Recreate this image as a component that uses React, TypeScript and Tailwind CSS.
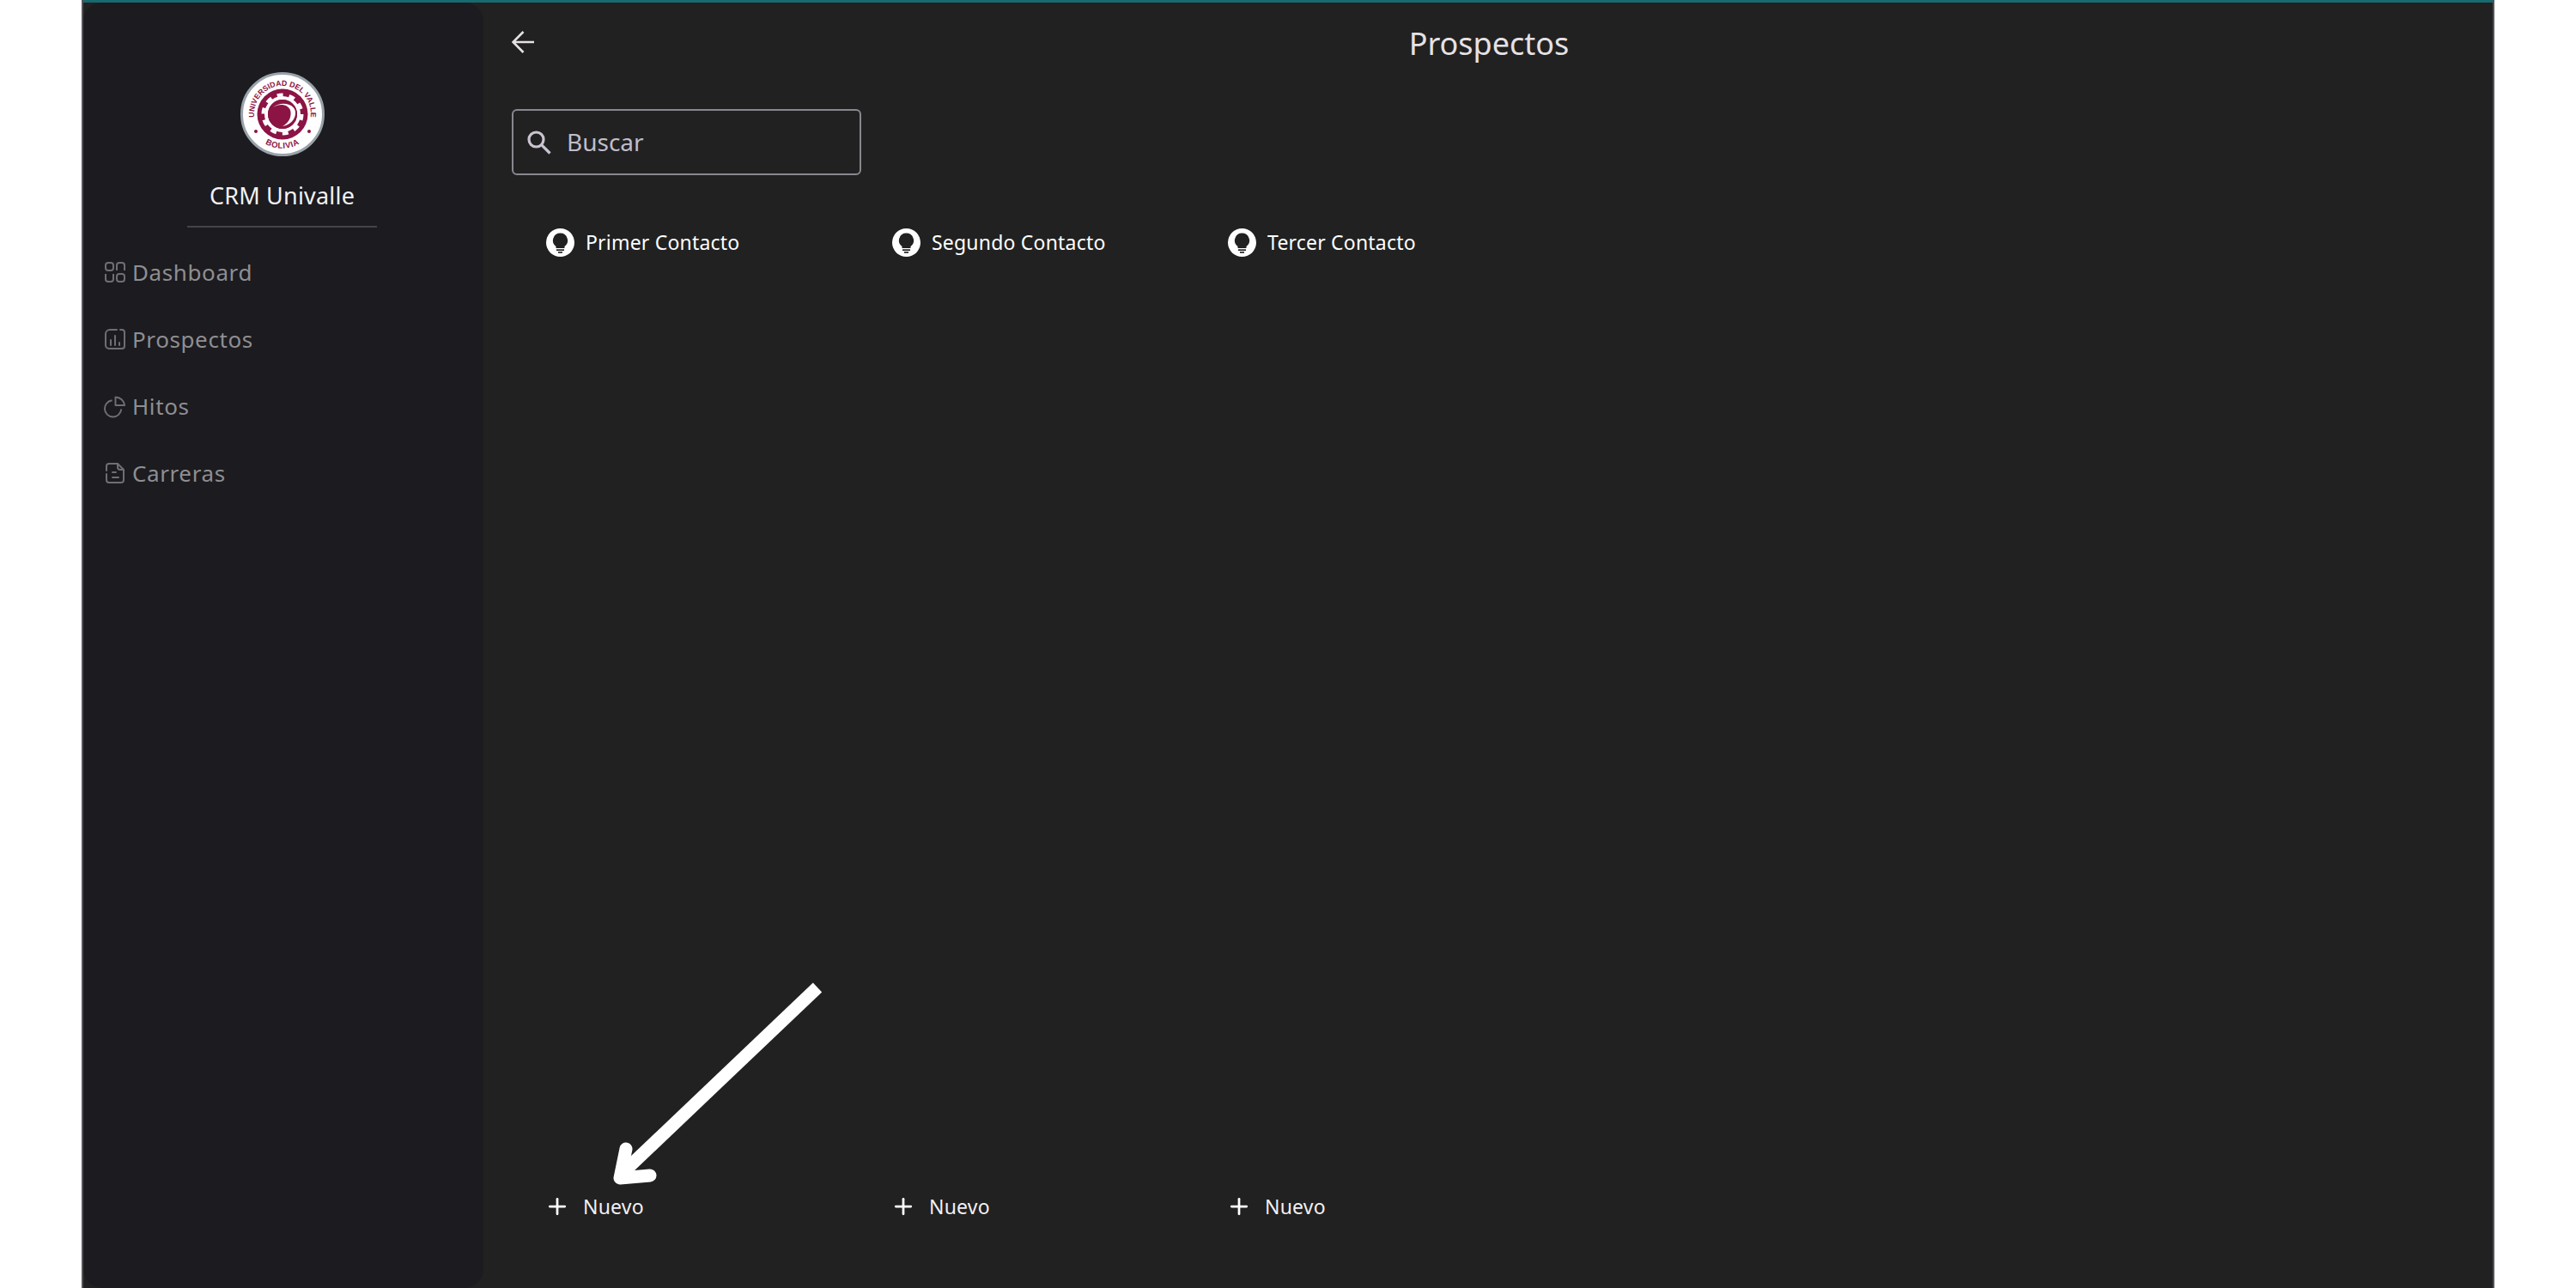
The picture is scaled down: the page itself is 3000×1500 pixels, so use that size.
import { Plus } from "lucide-react";

const navItems = [
  { label: "Dashboard", icon: <DashboardIcon /> },
  { label: "Prospectos", icon: <ChartIcon /> },
  { label: "Hitos", icon: <PieIcon /> },
  { label: "Carreras", icon: <DocIcon /> },
];

const columns = [
  { title: "Primer Contacto", width: "w-[403px]" },
  { title: "Segundo Contacto", width: "w-[391px]" },
  { title: "Tercer Contacto", width: "w-[400px]" },
];

function DashboardIcon() {
  return (
    <svg width="26" height="26" viewBox="0 0 26 26" fill="none" stroke="currentColor" strokeWidth="2">
      <rect x="2" y="2" width="9" height="9" rx="3" />
      <path d="M15 11V5a3 3 0 0 1 3-3h3a3 3 0 0 1 3 3v6" />
      <path d="M2 15v6a3 3 0 0 0 3 3h3a3 3 0 0 0 3-3v-6" />
      <rect x="15" y="15" width="9" height="9" rx="3" />
    </svg>
  );
}

function ChartIcon() {
  return (
    <svg width="26" height="26" viewBox="0 0 26 26" fill="none" stroke="currentColor" strokeWidth="2" strokeLinecap="round">
      <path d="M19 2h2a3 3 0 0 1 3 3v16a3 3 0 0 1-3 3H6a4 4 0 0 1-4-4V7a5 5 0 0 1 5-5h8" />
      <path d="M8 14v6M13 9v11M18 17v3" />
    </svg>
  );
}

function PieIcon() {
  return (
    <svg width="27" height="27" viewBox="0 0 27 27" fill="none" stroke="currentColor" strokeWidth="2">
      <path d="M21 16.500A10 10 0 1 1 10 6" />
      <path d="M14 2a11 11 0 0 1 11 10H14z" strokeLinejoin="round" />
    </svg>
  );
}

function DocIcon() {
  return (
    <svg width="24" height="26" viewBox="0 0 24 26" fill="none" stroke="currentColor" strokeWidth="2" strokeLinecap="round" strokeLinejoin="round">
      <path d="M2 10V5a3 3 0 0 1 3-3h10l7 7v12a3 3 0 0 1-3 3H5a3 3 0 0 1-3-3v-7" />
      <path d="M15 2v4a3 3 0 0 0 3 3h4M9 12h4M9 18h7" />
    </svg>
  );
}

function BulbBadge() {
  return (
    <span className="flex size-[33px] items-center justify-center rounded-full bg-white">
      <svg width="19" height="24" viewBox="0 0 19 24" fill="#212121">
        <path d="M9.500 0.500a8.500 8.500 0 0 0-5 15.400V18h10v-2.100a8.500 8.500 0 0 0-5-15.400z" />
        <rect x="5" y="19.300" width="9" height="1.700" />
        <rect x="7" y="22" width="5" height="1.700" />
      </svg>
    </span>
  );
}

function SearchIcon() {
  return (
    <svg width="30" height="30" viewBox="0 0 30 30" fill="none" stroke="#cac4d0" strokeWidth="3.200">
      <circle cx="11.500" cy="11.500" r="8.500" />
      <path d="m17.800 17.800 9.700 9.700" />
    </svg>
  );
}

function Logo() {
  return (
    <svg width="98" height="98" viewBox="0 0 98 98" className="block">
      <defs>
        <path id="logo-top" d="M16.500 54.500a33 33 0 1 1 65 0" />
        <path id="logo-bottom" d="M24 80a40 40 0 0 0 50 0" />
      </defs>
      <circle cx="49" cy="49" r="47.500" fill="#fff" stroke="#98a2aa" strokeWidth="3" />
      <text fill="#8c1444" fontFamily="'Liberation Sans', sans-serif" fontSize="8.800" fontWeight="700">
        <textPath href="#logo-top" startOffset="50%" textAnchor="middle">UNIVERSIDAD DEL VALLE</textPath>
      </text>
      <text fill="#8c1444" fontFamily="'Liberation Sans', sans-serif" fontSize="9.500" fontWeight="700" letterSpacing="0.500">
        <textPath href="#logo-bottom" startOffset="50%" textAnchor="middle">BOLIVIA</textPath>
      </text>
      <circle cx="18" cy="69" r="2" fill="#8c1444" />
      <circle cx="80" cy="69" r="2" fill="#8c1444" />
      <circle cx="49" cy="49" r="29.500" fill="#8c1444" />
      <circle cx="49" cy="49" r="19" fill="none" stroke="#fff" strokeWidth="4" />
      <circle cx="49" cy="49" r="22.500" fill="none" stroke="#fff" strokeWidth="4" strokeDasharray="7 7.137" />
      <circle cx="49" cy="49" r="17" fill="#8c1444" />
      <path d="M38 41c7-5 17-4 20 3 2 7-1 15-9 19 9-1 16-9 15-17-1-9-16-13-26-5z" fill="#fff" />
    </svg>
  );
}

function Sidebar() {
  return (
    <aside className="flex h-full w-[466px] shrink-0 flex-col items-center rounded-[22px] bg-[#1c1b1f] pt-[81px] pr-[3px]">
      <Logo />
      <h2 className="mt-[28px] text-[27px] leading-[36px] tracking-[0.2px] text-[#f2f0f3]">CRM Univalle</h2>
      <div className="mt-[17px] h-[2px] w-[221px] bg-[#45434a]" />
      <nav className="mt-[26px] flex w-full flex-col gap-[26px] pl-[24px]">
        {navItems.map((item) => (
          <a key={item.label} className="flex h-[52px] items-center gap-[7px] text-[26px] tracking-[0.6px] text-[#8f8e92]">
            <span className="flex w-[26px] justify-center text-[#6f6e72]">{item.icon}</span>
            {item.label}
          </a>
        ))}
      </nav>
    </aside>
  );
}

export default function App() {
  return (
    <div className="h-[1500px] w-[3000px] overflow-hidden bg-white px-[95px] font-['Noto_Sans','Open_Sans',sans-serif]">
      <div className="relative flex h-full flex-col border-x-2 border-[#55545a] bg-[#212121]">
        <div className="h-[3px] shrink-0 bg-[#176a70]" />
        <div className="flex min-h-0 flex-1">
          <Sidebar />
          <main className="flex min-w-0 flex-1 flex-col">
            <header className="relative flex h-[98px] shrink-0 items-center justify-center pb-[2px] pl-[2px]">
              <svg className="absolute top-[33px] left-[33px]" width="26" height="26" viewBox="0 0 26 26" fill="none" stroke="#e6e1e5" strokeWidth="2.600">
                <path d="M26 13H2M13.500 1 1.500 13l12 12" />
              </svg>
              <h1 className="text-[36px] leading-[48px] text-[#e6e1e5]">Prospectos</h1>
            </header>
            <div className="mt-[26px] ml-[33px] flex h-[77px] w-[407px] items-center rounded-[6px] border-2 border-[#8a878e] pl-[15px]">
              <SearchIcon />
              <span className="ml-[17px] pb-[2px] text-[28px] text-[#c2bdc8]">Buscar</span>
            </div>
            <div className="flex min-h-0 flex-1 pl-[73px]">
              {columns.map((column) => (
                <section key={column.title} className={`flex flex-col justify-between pt-[62px] pb-[77px] ${column.width}`}>
                  <div className="flex h-[33px] items-center gap-[13px]">
                    <BulbBadge />
                    <span className="text-[23px] tracking-[0.2px] text-white">{column.title}</span>
                  </div>
                  <button type="button" className="-ml-[2px] flex h-[36px] items-center gap-[15px] text-[23px] tracking-[0.2px] text-[#f2f0f3]">
                    <Plus size={30} strokeWidth={2.200} className="text-white" />
                    Nuevo
                  </button>
                </section>
              ))}
            </div>
          </main>
        </div>
        <svg className="absolute top-[1140px] left-[610px]" width="260" height="245" viewBox="0 0 260 245" fill="none">
          <path d="M245 10 18 226" stroke="#fff" strokeWidth="15" />
          <path d="M22 198 15 232 50 229" stroke="#fff" strokeWidth="15" strokeLinecap="round" strokeLinejoin="round" />
        </svg>
      </div>
    </div>
  );
}
